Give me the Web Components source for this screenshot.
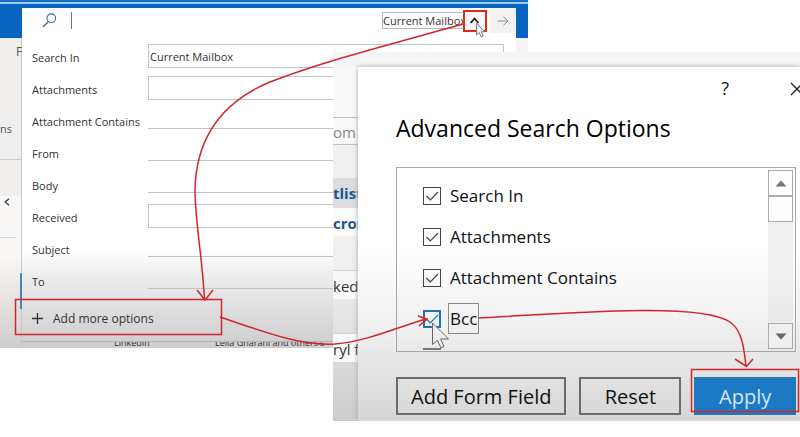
<!DOCTYPE html>
<html lang="en">
<head>
  <meta charset="utf-8">
  <title>Advanced Search Options</title>
  <style>
    body {
      margin: 0;
      background: #ffffff;
      font-family: "Open Sans", "Noto Sans", sans-serif;
      color: #333333;
    }
  </style>
</head>
<body>
  <search-guide></search-guide>

  <script>
    class SearchField extends HTMLElement {
      constructor() {
        super();
        this.attachShadow({ mode: "open" });
      }

      connectedCallback() {
        const label = this.getAttribute("label");
        const kind = this.getAttribute("kind") || "line";
        const value = this.getAttribute("value") || "";
        const control = kind === "box"
          ? `<select id="field" class="box"><option>${value}</option></select>`
          : `<input id="field" class="line" type="text">`;
        this.shadowRoot.innerHTML = `
          <style>
            :host {
              display: grid;
              grid-template-columns: 116px 1fr;
              align-items: start;
              height: 32px;
              font-size: 11px;
            }
            label {
              line-height: 32px;
              white-space: nowrap;
            }
            select, input {
              appearance: none;
              box-sizing: border-box;
              width: 100%;
              height: 24px;
              margin: 2px 0 0;
              padding: 0 1px;
              border: 1px solid #c3c3c3;
              border-radius: 0;
              background: transparent;
              color: inherit;
              font: inherit;
              outline: none;
            }
            .line {
              height: 21px;
              border-width: 0 0 1px;
            }
          </style>
          <label for="field">${label}</label>
          ${control}
        `;
      }
    }
    customElements.define("search-field", SearchField);

    class SearchBar extends HTMLElement {
      constructor() {
        super();
        this.attachShadow({ mode: "open" });
      }

      connectedCallback() {
        this.shadowRoot.innerHTML = `
          <style>
            :host {
              display: flex;
              align-items: center;
              height: 25px;
              padding-left: 20px;
              font-size: 11px;
            }
            .query {
              flex: 1;
              min-width: 0;
              height: 17px;
              margin-left: 14px;
              padding: 0 4px;
              border: 0;
              border-left: 1px solid #777777;
              background: transparent;
              outline: none;
            }
            .scope {
              appearance: none;
              box-sizing: border-box;
              width: 100px;
              height: 17px;
              margin-right: 8px;
              padding: 0;
              border: 1px solid #b9b9b9;
              border-radius: 0;
              background: #ffffff;
              color: inherit;
              font: inherit;
              line-height: 15px;
            }
            button {
              display: flex;
              align-items: center;
              justify-content: center;
              width: 26px;
              height: 25px;
              padding: 0;
              border: 0;
              background: #f3f2f1;
            }
          </style>
          <svg width="15" height="15" viewBox="0 0 15 15" fill="none">
            <path d="M6 9 L1 14" stroke="#505860" stroke-width="1.3"/>
            <circle cx="9.3" cy="5.2" r="4.3" stroke="#2c6ca4" stroke-width="1.1"/>
          </svg>
          <input class="query" type="text" aria-label="Search">
          <select class="scope" aria-label="Search scope"><option>Current Mailbox</option></select>
          <button aria-label="Run search">
            <svg width="12" height="10" viewBox="0 0 12 10" fill="none" stroke="#8a8a8a">
              <path d="M0.5 5 H11 M6.5 0.8 L11 5 L6.5 9.2"/>
            </svg>
          </button>
        `;
      }
    }
    customElements.define("search-bar", SearchBar);

    class MailWindow extends HTMLElement {
      constructor() {
        super();
        this.attachShadow({ mode: "open" });
      }

      connectedCallback() {
        this.shadowRoot.innerHTML = `
          <style>
            :host {
              display: grid;
              grid-template-columns: 22px 1fr 12px;
              grid-template-rows: 8px 30px 1fr;
              overflow: hidden;
              background: #f4f4f4;
            }
            .title {
              grid-column: 1 / 4;
              grid-row: 1 / 3;
              background: linear-gradient(#1173bb 0 2px, #9bc8e6 2px 4px, #0864c0 4px);
            }
            .rail {
              grid-column: 1;
              grid-row: 3;
              display: flex;
              flex-direction: column;
              box-sizing: border-box;
              border-right: 1px solid #c8c8c8;
              background: linear-gradient(#f1efee 0 158px, #f8f7f6 158px 220px, #cfcdcb);
              color: #555555;
              font-size: 12px;
            }
            .rail .tab {
              height: 83px;
              padding: 5px 0 0 16px;
              box-sizing: border-box;
            }
            .rail .group {
              height: 38px;
              font-size: 11px;
            }
            .rail .chevron {
              height: 78px;
              padding-left: 4px;
              padding-top: 38px;
              box-sizing: border-box;
              border-top: 1px solid #cfcfcf;
            }
            .rail svg {
              display: block;
            }
            .rail .rule {
              width: 16px;
              height: 35px;
              border-top: 1px solid #d5d5d5;
            }
            .rail .mark {
              width: 2px;
              height: 36px;
              margin-left: auto;
              margin-right: -1px;
              background: #4b84ad;
            }
            .panel {
              grid-column: 2;
              grid-row: 2 / 4;
              display: flex;
              flex-direction: column;
              overflow: hidden;
              background: linear-gradient(#ffffff 0 244px, #f0f0f0 262px, #cdcdcd);
            }
            .fields {
              padding: 9px 12px 0 10px;
            }
            .add {
              display: flex;
              align-items: center;
              gap: 9px;
              height: 30px;
              margin: 5px 0 0;
              padding: 0 0 0 9px;
              border: 0;
              background: transparent;
              color: inherit;
              font: inherit;
              font-size: 12px;
            }
            .result {
              display: grid;
              grid-template-columns: 101px 1fr;
              grid-template-rows: 4px;
              align-items: end;
              box-sizing: border-box;
              height: 5px;
              margin-top: 8px;
              padding-left: 92px;
              overflow: hidden;
              border-top: 1px solid #b5b5b5;
              font-size: 9px;
              line-height: 6px;
              white-space: nowrap;
            }
          </style>
          <div class="title"></div>
          <div class="rail">
            <div class="tab">F</div>
            <div class="group">ns</div>
            <div class="chevron">
              <svg width="6" height="8" viewBox="0 0 6 8" fill="none" stroke="#444444" stroke-width="1.4">
                <path d="M5 0.8 L1.2 4 L5 7.2"/>
              </svg>
            </div>
            <div class="rule"></div>
            <div class="mark"></div>
          </div>
          <div class="panel">
            <search-bar></search-bar>
            <div class="fields">
              <search-field label="Search In" kind="box" value="Current Mailbox"></search-field>
              <search-field label="Attachments" kind="box"></search-field>
              <search-field label="Attachment Contains"></search-field>
              <search-field label="From"></search-field>
              <search-field label="Body"></search-field>
              <search-field label="Received" kind="box"></search-field>
              <search-field label="Subject"></search-field>
              <search-field label="To"></search-field>
            </div>
            <button class="add">
              <svg width="13" height="13" viewBox="0 0 13 13" stroke="#333333" stroke-width="1.3">
                <path d="M1 6.5 H12 M6.5 1 V12"/>
              </svg>
              Add more options
            </button>
            <div class="result"><span>LinkedIn</span><span>Leila Gharani and others s</span></div>
          </div>
        `;
      }
    }
    customElements.define("mail-window", MailWindow);

    class CheckItem extends HTMLElement {
      constructor() {
        super();
        this.attachShadow({ mode: "open" });
      }

      connectedCallback() {
        this.shadowRoot.innerHTML = `
          <style>
            :host {
              display: block;
              height: 41px;
              --tick: #444444;
            }
            :host([active]) {
              --tick: #1c73c4;
            }
            label {
              display: flex;
              align-items: center;
              gap: 7px;
              height: 100%;
            }
            .box {
              display: grid;
            }
            .box > * {
              grid-area: 1 / 1;
            }
            input {
              appearance: none;
              box-sizing: border-box;
              width: 18px;
              height: 18px;
              margin: 0;
              border: 1px solid var(--tick);
              outline: none;
            }
            :host([active]) input {
              border-width: 2px;
            }
            svg {
              display: none;
              pointer-events: none;
            }
            input:checked + svg {
              display: block;
            }
            .text {
              padding: 3px 1px;
              border: 1px solid transparent;
              white-space: nowrap;
            }
            :host([active]) .text {
              border-color: #8a8a8a;
            }
          </style>
          <label>
            <span class="box">
              <input type="checkbox" ${this.hasAttribute("checked") ? "checked" : ""}>
              <svg width="18" height="18" viewBox="0 0 18 18" fill="none" stroke="var(--tick)" stroke-width="1.2">
                <path d="M3.5 9 L7.3 12.8 L15 5"/>
              </svg>
            </span>
            <span class="text"><slot></slot></span>
          </label>
        `;
      }
    }
    customElements.define("check-item", CheckItem);

    class OptionList extends HTMLElement {
      constructor() {
        super();
        this.attachShadow({ mode: "open" });
      }

      connectedCallback() {
        this.shadowRoot.innerHTML = `
          <style>
            :host {
              display: flex;
              box-sizing: border-box;
              height: 185px;
              padding: 2px;
              overflow: hidden;
              border: 1px solid #a8a8a8;
              font-size: 17px;
            }
            .items {
              flex: 1;
              height: 181px;
              padding: 5px 0 0 24px;
              box-sizing: border-box;
              overflow: hidden;
            }
            /* only the top edge of the next tick box shows */
            .next {
              width: 18px;
              height: 2px;
              margin-top: 9px;
              background: #777777;
            }
            .scroll {
              display: flex;
              flex-direction: column;
              width: 25px;
              background: linear-gradient(#f0f0f0 60%, #e6e6e6);
            }
            button, .thumb {
              box-sizing: border-box;
              width: 25px;
              height: 26px;
              padding: 0;
              border: 1px solid #ababab;
              background: #fdfdfd;
            }
            button {
              display: flex;
              align-items: center;
              justify-content: center;
            }
            .down {
              margin-top: auto;
              background: #efefef;
            }
          </style>
          <div class="items"><slot></slot><div class="next"></div></div>
          <div class="scroll">
            <button aria-label="Scroll up">
              <svg width="12" height="7" viewBox="0 0 12 7" fill="#777777"><path d="M0.5 6.5 L6 0.5 L11.5 6.5 Z"/></svg>
            </button>
            <div class="thumb"></div>
            <button class="down" aria-label="Scroll down">
              <svg width="12" height="7" viewBox="0 0 12 7" fill="#666666"><path d="M0.5 0.5 H11.5 L6 6.5 Z"/></svg>
            </button>
          </div>
        `;
      }
    }
    customElements.define("option-list", OptionList);

    class OptionsDialog extends HTMLElement {
      constructor() {
        super();
        this.attachShadow({ mode: "open" });
      }

      connectedCallback() {
        this.shadowRoot.innerHTML = `
          <style>
            :host {
              display: flex;
              flex-direction: column;
              overflow: hidden;
              box-sizing: border-box;
              padding: 0 4px 0 38px;
              background: linear-gradient(#ffffff 0 180px, #f0f0f0 260px, #d6d6d6);
              box-shadow: 0 0 5px #a8a8a8;
              color: #111111;
            }
            .top {
              display: flex;
              justify-content: flex-end;
              gap: 61px;
              height: 43px;
              margin-right: -8px;
            }
            .top button {
              padding: 0;
              border: 0;
              background: transparent;
              color: inherit;
              font: inherit;
              font-size: 18px;
              line-height: 43px;
            }
            .top svg {
              display: block;
            }
            h1 {
              margin: 0;
              height: 57px;
              line-height: 36px;
              font-size: 23px;
              font-weight: 500;
              color: #000000;
              white-space: nowrap;
            }
            .actions {
              display: flex;
              gap: 13px;
              margin-top: 25px;
            }
            .actions button {
              box-sizing: border-box;
              flex: 101 0 0;
              height: 38px;
              padding: 0;
              border: 2px solid #6b6b6b;
              background: transparent;
              color: inherit;
              font: inherit;
              font-size: 20px;
              white-space: nowrap;
            }
            .actions .wide {
              flex-grow: 172;
            }
            .actions .primary {
              border-color: #2576b8;
              background: #1b79c4;
              color: #d5e6f4;
            }
          </style>
          <div class="top">
            <button aria-label="Help">?</button>
            <button aria-label="Close">
              <svg width="14" height="14" viewBox="0 0 14 14" stroke="#222222" stroke-width="1.3">
                <path d="M1 1 L13 13 M13 1 L1 13"/>
              </svg>
            </button>
          </div>
          <h1>Advanced Search Options</h1>
          <option-list>
            <check-item checked>Search In</check-item>
            <check-item checked>Attachments</check-item>
            <check-item checked>Attachment Contains</check-item>
            <check-item checked active>Bcc</check-item>
          </option-list>
          <div class="actions">
            <button class="wide">Add Form Field</button>
            <button>Reset</button>
            <button class="primary">Apply</button>
          </div>
        `;
      }
    }
    customElements.define("options-dialog", OptionsDialog);

    class DialogWindow extends HTMLElement {
      constructor() {
        super();
        this.attachShadow({ mode: "open" });
      }

      connectedCallback() {
        this.shadowRoot.innerHTML = `
          <style>
            :host {
              display: grid;
              grid-template-columns: 25px 1fr;
              grid-template-rows: 15px 1fr;
              overflow: hidden;
              background: #f5f5f5;
            }
            .behind {
              grid-column: 1;
              grid-row: 2;
              display: flex;
              flex-direction: column;
              overflow: hidden;
              background: linear-gradient(#f9f9f9 0 76px, #f0f0f0 78px 200px, #cccccc);
              font-size: 15px;
              white-space: nowrap;
            }
            .address {
              height: 26px;
              margin: 50px 0 33px;
              border: solid #c0c0c0;
              border-width: 1px 0;
              line-height: 28px;
              color: #888888;
            }
            .link {
              height: 30px;
              line-height: 31px;
              font-weight: 700;
              color: #17578f;
              background: #dcdddf;
            }
            .link.plain {
              height: 28px;
              background: #fbfbfb;
            }
            .row {
              height: 28px;
              margin-top: 34px;
              line-height: 30px;
              background: #f8f8f8;
              border-top: 1px solid #d5d5d5;
            }
            options-dialog {
              grid-column: 2;
              grid-row: 2;
            }
          </style>
          <div class="behind">
            <div class="address">om</div>
            <div class="link">tlist</div>
            <div class="link plain">cros</div>
            <div class="row">ked</div>
            <div class="row">ryl f</div>
          </div>
          <options-dialog></options-dialog>
        `;
      }
    }
    customElements.define("dialog-window", DialogWindow);

    class SearchGuide extends HTMLElement {
      constructor() {
        super();
        this.attachShadow({ mode: "open" });
      }

      connectedCallback() {
        this.shadowRoot.innerHTML = `
          <style>
            :host {
              display: grid;
              grid-template-columns: 333px 195px 1fr;
              grid-template-rows: 52px 296px 73px;
              position: relative;
              overflow: hidden;
            }
            mail-window {
              grid-column: 1 / 3;
              grid-row: 1 / 3;
            }
            dialog-window {
              grid-column: 2 / 4;
              grid-row: 2 / 4;
            }
            .notes {
              position: absolute;
              top: 0;
              left: 0;
              pointer-events: none;
            }
          </style>
          <mail-window></mail-window>
          <dialog-window></dialog-window>
          <svg class="notes" width="800" height="421" viewBox="0 0 800 421" fill="none">
            <!-- expand button -->
            <rect x="464" y="11" width="22" height="20" fill="#f7f7f7" stroke="#dd2a1c" stroke-width="2"/>
            <path d="M470.5 23 L474.5 18.5 L478.5 23" stroke="#222222" stroke-width="1.8"/>
            <!-- mouse pointers -->
            <path d="M476.5 23 V35 L479.2 32.5 L481.3 37 L483.3 36 L481.3 31.8 H484.5 Z" fill="#f6f6f6" stroke="#777777" stroke-width="1"/>
            <path d="M432.5 323 V344.5 L437.3 340.2 L441 348 L444 346.5 L440.6 339 H448.5 Z" fill="#ededed" stroke="#666666" stroke-width="1"/>
            <!-- steps -->
            <g stroke="#d2262b" stroke-width="1.5">
              <rect x="15.5" y="299.5" width="206" height="35"/>
              <rect x="691.5" y="369.5" width="107" height="42"/>
              <path d="M463 24 C400 42 330 59 270 82 C220 103 196 140 195 190 C195 220 202 255 204.5 299"/>
              <path d="M197 290 L205 300 L213 290"/>
              <path d="M220 317 C262 331 300 346 335 344 C368 341 395 328 426 319"/>
              <path d="M418 316 L427 319 L419 326"/>
              <path d="M479 318 C530 315 590 311 640 310.5 C690 310 718 314 730 322 C742 330 744 348 746 366"/>
              <path d="M735 359 L746.5 366.5 L753 359"/>
            </g>
          </svg>
        `;
      }
    }
    customElements.define("search-guide", SearchGuide);
  </script>
</body>
</html>
